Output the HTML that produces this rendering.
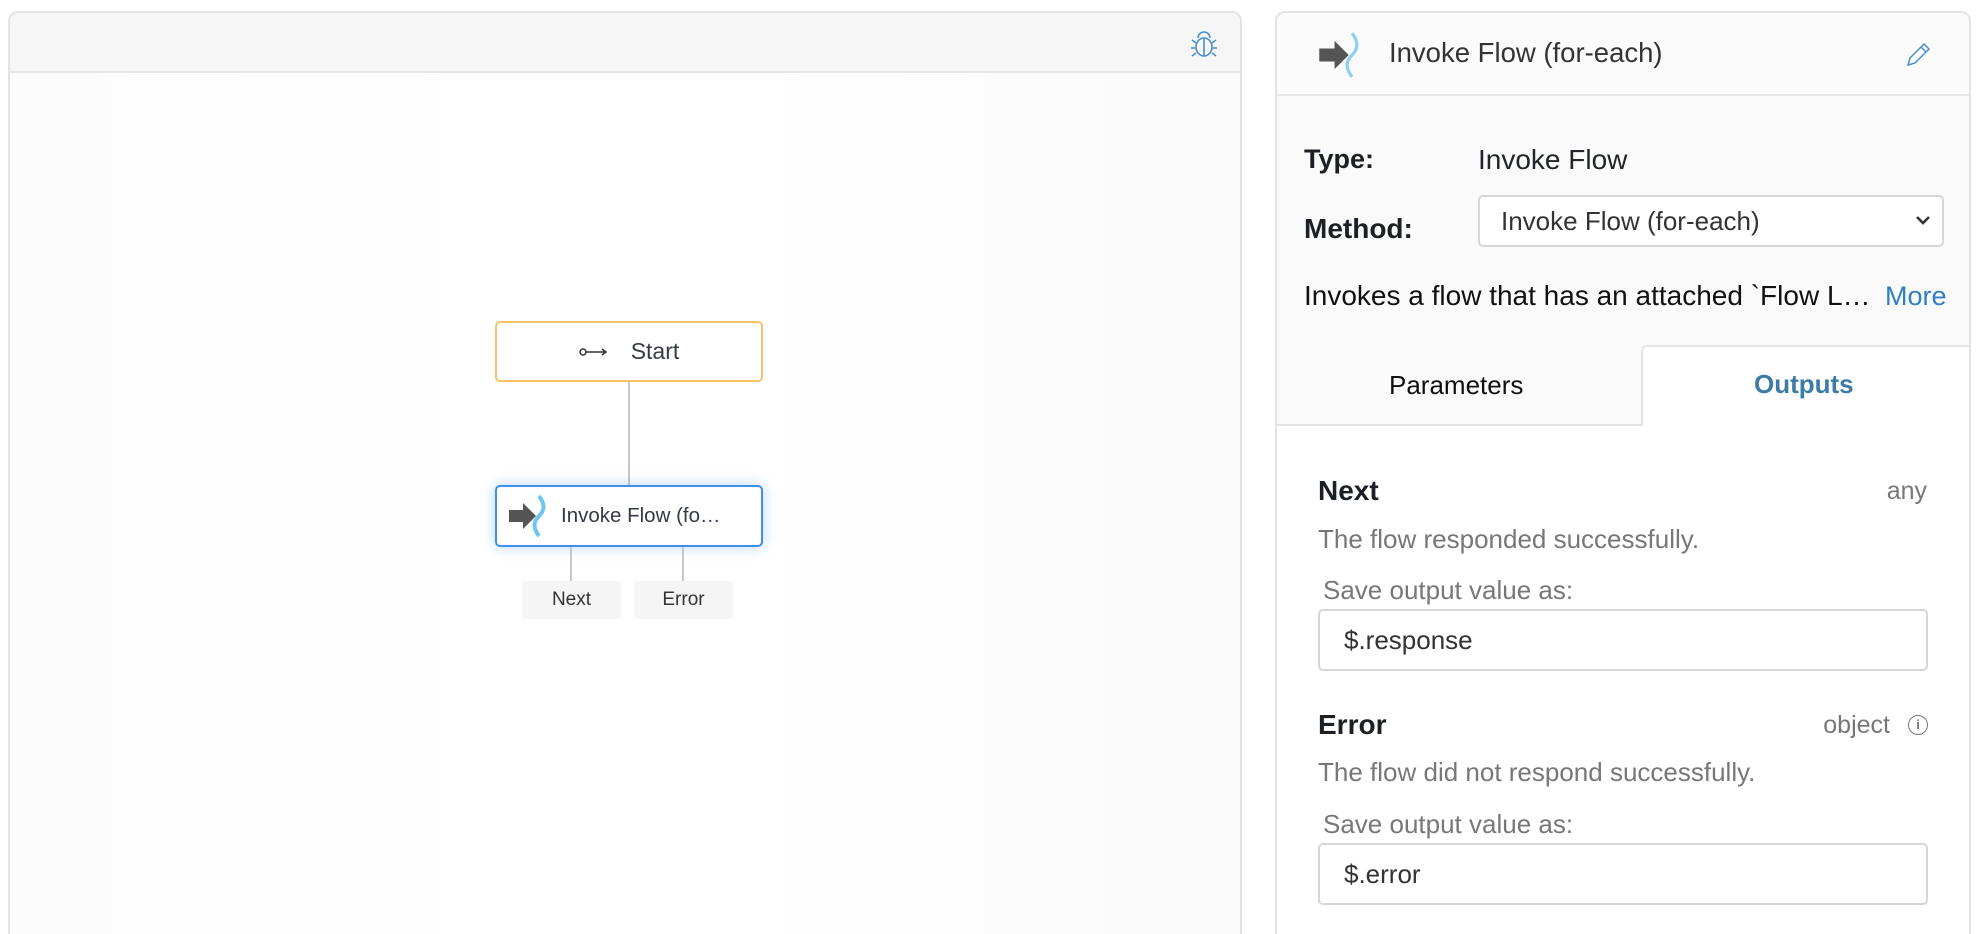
<!DOCTYPE html>
<html><head><meta charset="utf-8"><style>
*{box-sizing:border-box;margin:0;padding:0}
html,body{width:1984px;height:934px;overflow:hidden}
body{background:#fff;font-family:"Liberation Sans",Helvetica,Arial,sans-serif;position:relative;color:#212529}
.abs{position:absolute}
#left{left:8px;top:11px;width:1234px;height:923px;border:2px solid #e3e3e3;border-bottom:none;border-radius:10px 10px 0 0;background:linear-gradient(90deg,#fcfcfc,#fff 40%,#fff 60%,#fafafa);overflow:hidden}
#lhead{left:0;top:0;right:0;height:60px;background:#f6f6f6;border-bottom:2px solid #e6e6e6}
.node{border-radius:5px;background:#fff;display:flex;align-items:center;font-size:22px;color:#333a45}
.sub{background:#f5f5f5;border-radius:4px;font-size:19px;color:#333;display:flex;align-items:center;justify-content:center}
.vl{width:2px;background:#c8c8c8}
#right{left:1275px;top:11px;width:696px;height:923px;border:2px solid #e3e3e3;border-bottom:none;border-radius:10px 10px 0 0;background:#fafafa;overflow:hidden}
.lbl{font-weight:bold;font-size:27px;color:#1c1f24}
.t{font-size:26px}
.gray{color:#777}
.inp{background:#fff;border:2px solid #d6d6d6;border-radius:5px;font-size:26px;color:#333;display:flex;align-items:center;padding-left:24px}
</style></head><body>
<div id="left" class="abs">
 <div id="lhead" class="abs"></div>
 <svg class="abs" style="left:1177px;top:14px" width="34" height="34" viewBox="0 0 34 34" fill="none" stroke="#4a8fd0" stroke-width="1.6">
  <path d="M11 11 a6 6 0 0 1 12 0"/><ellipse cx="17" cy="20" rx="8" ry="9"/><path d="M17 11v18M9 16l-4-3M9 21H4M9 26l-4 3M25 16l4-3M25 21h5M25 26l4 3"/>
 </svg>
</div>
<div class="abs node" style="left:495px;top:321px;width:268px;height:61px;border:2px solid #f7c266;justify-content:center">
 <svg width="30" height="12" viewBox="0 0 30 12" style="margin-right:22px"><circle cx="4" cy="6" r="3" fill="none" stroke="#333" stroke-width="1.5"/><path d="M7 6h20M23 3l4 3-4 3" fill="none" stroke="#333" stroke-width="1.5"/></svg><span style="font-size:23px">Start</span></div>
<div class="abs vl" style="left:628px;top:382px;height:103px"></div>
<div class="abs node" style="left:495px;top:485px;width:268px;height:62px;border:2px solid #3d8ff0;box-shadow:0 0 14px rgba(61,143,240,.35);padding-left:10px">
 <svg width="42" height="44" viewBox="0 0 42 44"><path d="M2 16h14v-7l13 13-13 13v-7H2z" fill="#555"/><path d="M32 2c6 8 6 14 0 20s-6 12 0 20" stroke="#6cc6ee" stroke-width="4" fill="none"/></svg>
 <span style="margin-left:12px;font-size:20.5px">Invoke Flow (fo…</span></div>
<div class="abs vl" style="left:570px;top:547px;height:34px"></div>
<div class="abs vl" style="left:682px;top:547px;height:34px"></div>
<div class="abs sub" style="left:522px;top:581px;width:99px;height:38px">Next</div>
<div class="abs sub" style="left:634px;top:581px;width:99px;height:38px">Error</div>

<div id="right" class="abs">
 <div class="abs" style="left:0;top:0;right:0;height:83px;background:#fbfbfb;border-bottom:2px solid #e6e6e6"></div>
 <svg class="abs" style="left:40px;top:18px" width="46" height="48" viewBox="0 0 42 44"><path d="M2 16h14v-7l13 13-13 13v-7H2z" fill="#555"/><path d="M32 2c6 8 6 14 0 20s-6 12 0 20" stroke="#8fd0f0" stroke-width="3" fill="none"/></svg>
 <div class="abs" style="left:112px;top:24px;font-size:27.5px;color:#333">Invoke Flow (for-each)</div>
 <svg class="abs" style="left:627px;top:26px" width="30" height="30" viewBox="0 0 30 30" fill="none" stroke="#4a8fd0" stroke-width="1.5"><path d="M4 26l2-7L20 5l5 5-14 14z M17 8l5 5"/></svg>
 <div class="abs lbl" style="left:27px;top:131px">Type:</div>
 <div class="abs t" style="left:201px;top:131px;font-size:28px">Invoke Flow</div>
 <div class="abs lbl" style="left:27px;top:200px;font-size:28px">Method:</div>
 <div class="abs inp" style="left:201px;top:182px;width:466px;height:52px;padding-left:21px">Invoke Flow (for-each)
  <svg class="abs" style="right:10px;top:16px" width="18" height="14" viewBox="0 0 18 14"><path d="M3 4l6 6 6-6" stroke="#333" stroke-width="2.6" fill="none"/></svg></div>
 <div class="abs t" style="left:27px;top:267px;font-size:28px;color:#111">Invokes a flow that has an attached `Flow L…</div>
 <div class="abs t" style="left:608px;top:268px;font-size:27px;color:#2f7fc1">More</div>
 <div class="abs" style="left:0;top:411px;width:368px;height:2px;background:#e3e3e3"></div>
 <div class="abs" style="left:364px;top:332px;width:332px;height:591px;background:#fff;border:2px solid #e3e3e3;border-right:none;border-bottom:none;border-radius:6px 0 0 0"></div>
 <div class="abs" style="left:0;top:413px;width:692px;height:510px;background:#fff"></div>
 <div class="abs t" style="left:112px;top:357px;color:#111">Parameters</div>
 <div class="abs" style="left:477px;top:356px;font-size:26px;font-weight:bold;color:#3a7ca5">Outputs</div>
 <div class="abs lbl" style="left:41px;top:462px;font-size:28px">Next</div>
 <div class="abs t gray" style="right:42px;top:464px;font-size:25px">any</div>
 <div class="abs t gray" style="left:41px;top:511px">The flow responded successfully.</div>
 <div class="abs t gray" style="left:46px;top:562px">Save output value as:</div>
 <div class="abs inp" style="left:41px;top:596px;width:610px;height:62px">$.response</div>
 <div class="abs lbl" style="left:41px;top:696px;font-size:28px">Error</div>
 <div class="abs t gray" style="right:79px;top:698px;font-size:25px">object</div>
 <div class="abs" style="left:631px;top:702px;width:20px;height:20px;border:1.5px solid #777;border-radius:50%;font-size:13px;color:#777;text-align:center;line-height:17px;font-weight:bold">i</div>
 <div class="abs t gray" style="left:41px;top:744px">The flow did not respond successfully.</div>
 <div class="abs t gray" style="left:46px;top:796px">Save output value as:</div>
 <div class="abs inp" style="left:41px;top:830px;width:610px;height:62px">$.error</div>
</div>
</body></html>
